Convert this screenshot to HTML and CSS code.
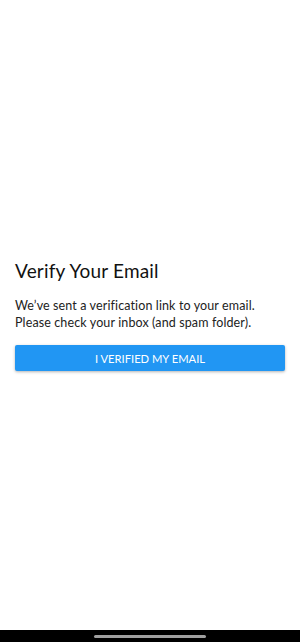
FILE: index.html
```html
<!DOCTYPE html>
<html>
<head>
<meta charset="utf-8">
<link rel="stylesheet" href="styles.css">
</head>
<body>
<div class="screen">
  <main class="content">
    <h1 class="title">Verify Your Email</h1>
    <p class="message">We’ve sent a verification link to your email.<br>Please check your inbox (and spam folder).</p>
    <button class="verify-btn">I VERIFIED MY EMAIL</button>
  </main>
  <div class="nav-bar"><span class="nav-pill"></span></div>
</div>
</body>
</html>
```
FILE: styles.css
```css
html, body {
  margin: 0;
  padding: 0;
  background: #ffffff;
}
.screen {
  width: 300px;
  height: 642px;
  display: flex;
  flex-direction: column;
  font-family: "Lato", "Noto Sans", sans-serif;
}
.content {
  flex: 1;
  display: flex;
  flex-direction: column;
  justify-content: center;
  padding: 0 15px;
}
.title {
  margin: 0;
  font-size: 19px;
  font-weight: 400;
  letter-spacing: 0.2px;
  color: #111111;
  line-height: 24px;
}
.message {
  margin: 14px 0 0 0;
  font-size: 12.5px;
  letter-spacing: 0.12px;
  line-height: 17px;
  color: #222222;
}
.verify-btn {
  margin-top: 14px;
  height: 26px;
  width: 100%;
  border: none;
  border-radius: 2px;
  background: #2196f3;
  color: #ffffff;
  font-family: inherit;
  font-size: 11.2px;
  box-shadow: 0 1px 3px rgba(0,0,0,0.3);
  padding: 0;
}
.nav-bar {
  height: 12px;
  background: #000000;
  display: flex;
  justify-content: center;
  align-items: center;
}
.nav-pill {
  width: 112px;
  height: 3px;
  border-radius: 2px;
  background: #a0a0a0;
}
```
